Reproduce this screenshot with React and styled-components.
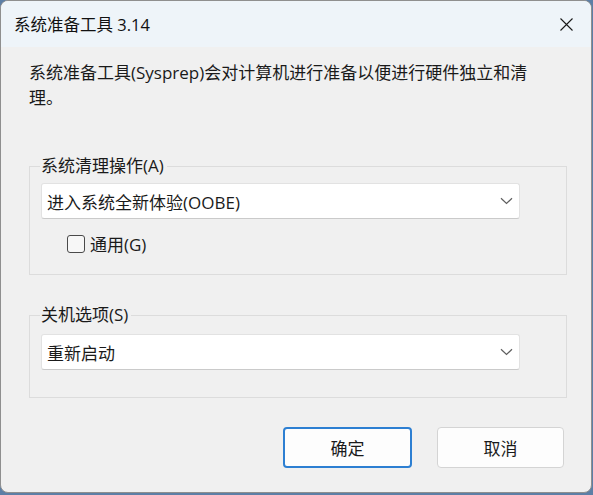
import styled, { createGlobalStyle } from "styled-components";

const GlobalStyle = createGlobalStyle`
  html, body {
    margin: 0;
    padding: 0;
    background: #5d7fa6;
  }
  body {
    font-family: "Segoe UI", "Open Sans", "Noto Sans CJK SC", sans-serif;
    color: #1a1a1a;
  }
`;

const Window = styled.div`
  width: 590px;
  height: 491px;
  border: 1px solid #8f8f8f;
  border-radius: 8px;
  overflow: hidden;
  background: #f0f0f0;
  display: flex;
  flex-direction: column;
`;

const TitleBar = styled.div`
  height: 46px;
  flex: none;
  display: flex;
  align-items: center;
  justify-content: space-between;
  padding: 0 18px 0 13px;
  background: #eef4f9;
  font-size: 16.5px;
  color: #111;
`;

const CloseButton = styled.button`
  border: none;
  background: transparent;
  padding: 0;
  width: 14px;
  height: 14px;
  display: flex;
  align-items: center;
  justify-content: center;
  svg {
    display: block;
  }
`;

const Body = styled.div`
  flex: 1;
  display: flex;
  flex-direction: column;
  padding: 13px 24px 0 28px;
`;

const Intro = styled.p`
  margin: 0 0 45px;
  font-size: 17px;
  line-height: 25px;
  white-space: nowrap;
`;

const Group = styled.fieldset`
  margin: 0 0 ${(p) => p.$gap || 0}px;
  padding: ${(p) => p.$top}px 46px ${(p) => p.$bottom}px 11px;
  border: 1px solid #dcdcdc;
  min-width: 0;
`;

const Legend = styled.legend`
  margin-left: -1px;
  padding: 0 3px 0 1px;
  font-size: 17px;
  line-height: 22px;
`;

const Select = styled.div`
  height: 34px;
  display: flex;
  align-items: center;
  justify-content: space-between;
  padding: 0 6px 0 5px;
  background: #fff;
  border: 1px solid #e2e2e2;
  border-bottom-color: #cacaca;
  border-radius: 3px;
  font-size: 17px;
`;

const CheckRow = styled.label`
  display: flex;
  align-items: center;
  gap: 5px;
  margin: 12px 0 0 26px;
  font-size: 17px;
`;

const Box = styled.span`
  width: 16px;
  height: 16px;
  border: 1px solid #4a4a4a;
  border-radius: 3px;
  background: #f7f7f7;
`;

const Footer = styled.div`
  display: flex;
  justify-content: flex-end;
  gap: 25px;
  margin: 29px 3px 0 0;
`;

const Button = styled.button`
  width: ${(p) => p.$w}px;
  height: 41px;
  border-radius: 4px;
  border: ${(p) => (p.$primary ? "2px solid #2d7fd2" : "1px solid #d4d4d4")};
  background: #fdfdfd;
  font-family: inherit;
  font-size: 17px;
  color: #1a1a1a;
`;

const Chevron = () => (
  <svg width="13" height="8" viewBox="0 0 13 8">
    <path d="M1 1.2 L6.5 6.5 L12 1.2" fill="none" stroke="#5f5f5f" strokeWidth="1.2" />
  </svg>
);

export default function App() {
  return (
    <>
      <GlobalStyle />
      <Window>
        <TitleBar>
          <span>系统准备工具 3.14</span>
          <CloseButton aria-label="关闭">
            <svg width="13" height="13" viewBox="0 0 13 13">
              <path d="M0.5 0.5 L12.5 12.5 M12.5 0.5 L0.5 12.5" stroke="#1a1a1a" strokeWidth="1.1" />
            </svg>
          </CloseButton>
        </TitleBar>
        <Body>
          <Intro>
            系统准备工具(Sysprep)会对计算机进行准备以便进行硬件独立和清
            <br />
            理。
          </Intro>
          <Group $top={6} $bottom={18} $gap={29}>
            <Legend>系统清理操作(A)</Legend>
            <Select>
              <span>进入系统全新体验(OOBE)</span>
              <Chevron />
            </Select>
            <CheckRow>
              <Box />
              <span>通用(G)</span>
            </CheckRow>
          </Group>
          <Group $top={8} $bottom={27}>
            <Legend>关机选项(S)</Legend>
            <Select>
              <span>重新启动</span>
              <Chevron />
            </Select>
          </Group>
          <Footer>
            <Button $primary $w={129}>确定</Button>
            <Button $w={127}>取消</Button>
          </Footer>
        </Body>
      </Window>
    </>
  );
}
